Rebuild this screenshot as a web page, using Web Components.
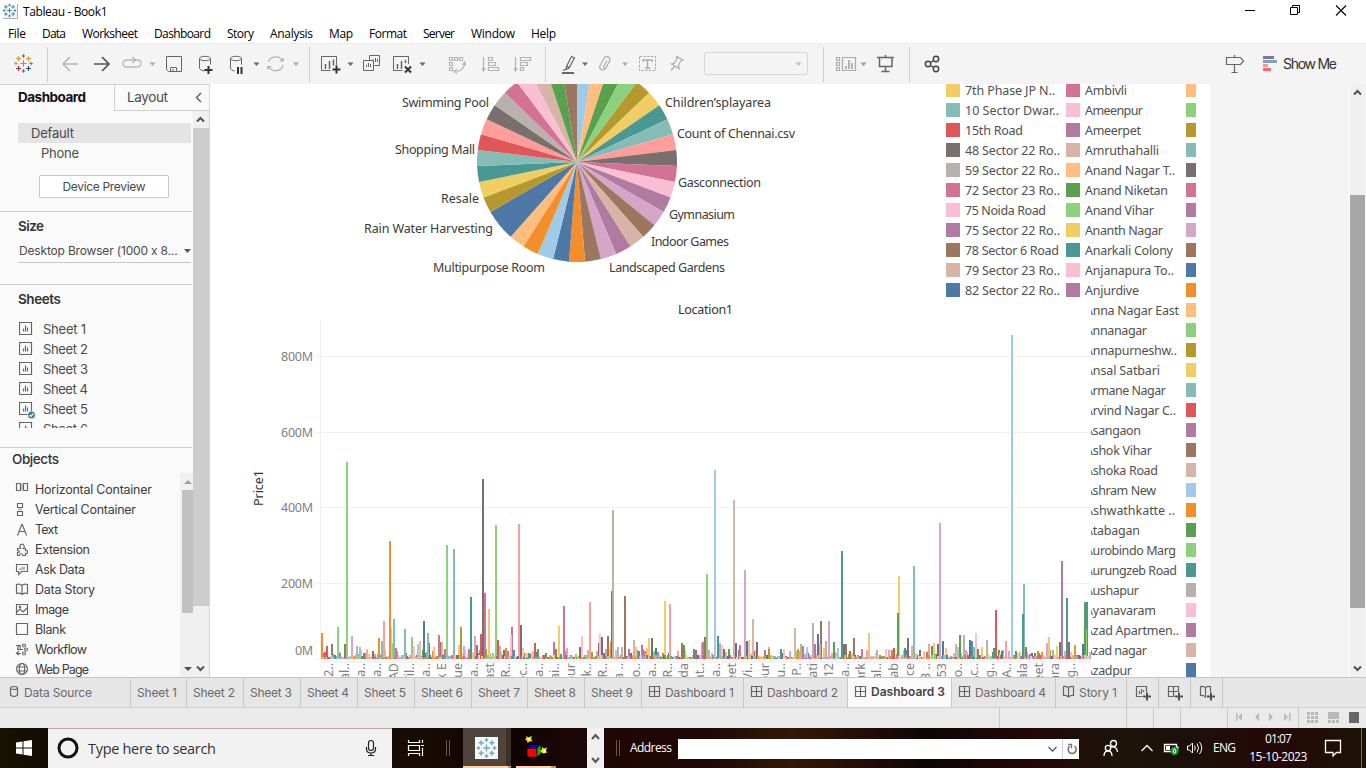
<!DOCTYPE html>
<html lang="en">
<head>
<meta charset="utf-8">
<title>Tableau - Book1</title>
<style>
html,body{margin:0;height:100%;overflow:hidden;background:#fff}
body{font-family:"Open Sans","Noto Sans",sans-serif}
</style>
</head>
<body>
<tableau-app></tableau-app>
<script>
const UI='"Open Sans","Noto Sans",sans-serif', PANEL='Inter,Roboto,sans-serif', VIZ='"Noto Sans","Open Sans",sans-serif';
const C={b:'#4e79a7',lb:'#a0cbe8',o:'#f28e2b',lo:'#ffbe7d',g:'#59a14f',lg:'#8cd17d',au:'#b6992d',y:'#f1ce63',t:'#499894',lt:'#86bcb6',r:'#e15759',s:'#ff9d9a',d:'#79706e',gy:'#bab0ac',m:'#d37295',p:'#fabfd2',pu:'#b07aa1',li:'#d4a6c8',br:'#9d7660',tn:'#d7b5a6'};
const define=(name,css,html,after)=>customElements.define(name,class extends HTMLElement{
  connectedCallback(){
    if(this.shadowRoot)return;
    const root=this.attachShadow({mode:'open'});
    root.innerHTML='<style>:host{display:block;box-sizing:border-box}svg{display:block}'+css+'</style>'+(typeof html==='function'?html(this):html);
    if(after)after(this,root);
  }
});
// A vertical strip of a bar, drawn in window coordinates.
const seg=(x0,x1,y0,h,inner)=>`<svg width="${x1-x0}" height="${h}" viewBox="${x0} ${y0} ${x1-x0} ${h}" fill="none" stroke="#666" style="flex:none">${inner}</svg>`;
// A run of text whose advance is adjusted to a given width.
define('fit-text',':host{display:inline-block;white-space:pre;flex:none}span{display:inline-block}','<span><slot></slot></span>',(el,root)=>{
  const w=parseFloat(el.getAttribute('w'));if(!w)return;
  const s=root.querySelector('span'),n=el.textContent.length,nat=s.getBoundingClientRect().width;
  el.style.width=w+'px';
  s.style.letterSpacing=((w-nat)/Math.max(1,n-1))+'px';
});
const fit=(s,w,st='')=>`<fit-text w="${w}" style="${st}">${s}</fit-text>`;
const svgText=(s,x,y,w,extra='')=>`<text x="${x}" y="${y}" textLength="${w}" ${extra}>${s}</text>`;
const plus=(x,y,r,c,w=1.2)=>`<path d="M${x-r} ${y}h${2*r}M${x} ${y-r}v${2*r}" stroke="${c}" stroke-width="${w}"/>`;
const mark=(x,y,k,cs,w)=>plus(x,y,3*k,cs[0],w)+[[0,-7,1],[7,0,2],[0,7,3],[-7,0,4]].map(a=>plus(x+a[0]*k,y+a[1]*k,1.6*k,cs[a[2]],w)).join('')+[[4.6,-4.6,5],[4.6,4.6,6],[-4.6,4.6,7],[-4.6,-4.6,8]].map(a=>plus(x+a[0]*k,y+a[1]*k,2.2*k,cs[a[2]],w)).join('');
const blueMark=Array(9).fill('#3b86b4');
const caret=(x,y,c='#666')=>`<path d="M${x-3} ${y-1.5}h6l-3 3.5z" fill="${c}" stroke="none"/>`;

define('title-bar',':host{display:flex;height:23px;background:#fff;color:#000;font:12px/23px '+UI+'}i{flex:1}',()=>
  seg(0,23,0,23,`<rect x="3" y="4" width="14" height="14" fill="#f4f4f4" stroke="none"/><path d="M3 18.5h14.5V4" stroke="#b0b0b0"/>`+mark(9.5,10.5,.78,blueMark,1))+
  fit('Tableau - Book1',84.5)+'<i></i>'+
  seg(1230,1366,0,23,`<g stroke="#000"><path d="M1245 10.5h10"/><path d="M1290.5 7.5h7v7h-7zM1292.5 7.5v-2h7v7h-2"/><path d="M1336 5.5l10 10M1346 5.5l-10 10" stroke-width="1.1"/></g>`));

define('menu-bar',':host{display:flex;height:20px;gap:16px;padding-left:8px;background:#fff;color:#000;font:12px/21px '+UI+'}',
  [['File',18],['Data',24],['Worksheet',56],['Dashboard',57],['Story',27],['Analysis',43],['Map',24],['Format',38],['Server',32],['Window',44],['Help',25]].map(a=>fit(...a)).join(''));

const S=(a,b,i)=>seg(a,b,44,40,i);
const sep=x=>S(x,x+1,`<path d="M${x+.5} 47v35" stroke="#cfcfcf"/>`);
define('tool-bar',':host{display:flex;height:41px;background:#f4f4f4;border-top:1px solid #ececec;color:#333}i{flex:1}fit-text{font:14px/39px '+PANEL+'}',()=>
  S(0,47,mark(23.5,63.5,1.08,['#e8762c','#5b6591','#5b879b','#5b6591','#7fa4ad','#eb912c','#1f457e','#c72035','#eb912c'],1.1))+sep(47)+
  S(48,309,`<path d="M63 64h15M70 57l-7 7 7 7" stroke="#b5b5b5" stroke-width="1.5"/><path d="M94 64h15M102 57l7 7-7 7" stroke="#555" stroke-width="1.7"/>
  <path d="M134 60h-7q-4 0-4 3.500t4 3.500h9q5 0 5-3.500t-4-3.500h-4M132 57l4 3-4 3" stroke="#b8b8b8" stroke-width="1.300"/>${caret(152.5,64,'#aaa')}
  <path d="M166.500 56.500h15v15h-13l-2-2zM170.500 71.500v-4h6v4M173 69v2"/>
  <ellipse cx="205" cy="58.500" rx="5.500" ry="2.200"/><path d="M199.500 58.500v10q1 2 5 2.500M210.500 58.500v6"/><path d="M204.500 70h8M208.500 66v8" stroke="#333" stroke-width="2"/>
  <ellipse cx="236" cy="58.500" rx="5.500" ry="2.200"/><path d="M230.500 58.500v10q1 2 4 2.500M241.500 58.500v6"/><path d="M238 67v7M241.500 67v7" stroke="#333" stroke-width="2"/>${caret(256.5,64)}
  <path d="M268.500 62a7.500 7 0 0 1 14-1M283 65a7.500 7 0 0 1-14 2" stroke="#b5b5b5" stroke-width="1.300"/><path d="M279 61.500h5v-4zM272 66h-5v4z" fill="#b5b5b5" stroke="none"/>${caret(296,64,'#aaa')}`)+sep(309)+
  S(310,545,`<path d="M336.500 65v-8.500h-15v14h9"/><path d="M325.500 64v5M329.500 61v8M333.500 59.500v6" stroke-width="1.500"/><path d="M332.500 69.500h8M336.500 65.500v8" stroke="#333" stroke-width="2"/>${caret(350.5,64)}
  <path d="M369.500 60.500v-5h10v10h-5M363.500 60.500h10v10h-10zM373 61v-2M375.500 62v-4M377.500 62v-3M366.500 67v-2M368.500 67v-4M370.500 67v-3"/>
  <path d="M408.500 64v-7.500h-15v14h9"/><path d="M397.500 64v5M401.500 61v8M405.500 60v3" stroke-width="1.500"/><path d="M405 66.500l6 6M411 66.500l-6 6" stroke="#333" stroke-width="2"/>${caret(422.5,64)}
  <g stroke="#b2b2b2" stroke-width="1.200"><path d="M449.500 57.500h3v3h-3zM454.500 57.500h3v3h-3zM459.500 57.500h3v3h-3zM449.500 62.500h3v3h-3zM449.500 67.500h3v3h-3zM464.500 63q0 7-8 8.500M462.500 65l2-3 1 3M457 69l-3 2.500 3 1.500"/>
  <path d="M483.500 57v13M481.500 68l2 3 2-3M488.500 57.500h4v3h-4zM488.500 62.500h7v3h-7zM488.500 67.500h10v3h-10z"/><path d="M515.500 57v13M513.500 68l2 3 2-3M520.500 57.500h10v3h-10zM520.500 62.500h7v3h-7zM520.500 67.500h3v3h-3z"/></g>`)+sep(545)+
  S(546,823,`<path d="M571.500 56.500l3 1.500-5.500 10-3 1.500.5-3zM567 66l2 2M566 69l-3 1.500" stroke-width="1.200"/><path d="M562 73h12" stroke-width="2"/>${caret(585,64)}
  <path d="M610 60l-4 8q-2 3-5 1.500-2-1.500-1-4l4-7q2-3 4.500-1.500t1 4.500l-3.500 6q-1 1.500-2 .5t0-2l3-5.500" stroke="#adadad" stroke-width="1.200"/>${caret(625,64,'#aaa')}
  <rect x="639.500" y="56.500" width="16" height="14" stroke="#aaa" stroke-dasharray="2.500 1.300"/><path d="M643 62v-2h9v2M647.500 60v8M645 68h5" stroke="#aaa" stroke-width="1.400"/>
  <path d="M676.500 56.500l6.500 3.500-2 .5-2.500 4.500.5 3.500-7.500-4.500 3-1 2.500-4.500zM674.500 66.500l-3.500 4" stroke="#aaa" stroke-width="1.200"/>
  <rect x="704.500" y="52.500" width="103" height="22" rx="1" stroke="#d5d5d5"/>${caret(798.5,64,'#c0c0c0')}`)+sep(823)+
  S(824,909,`<g stroke="#aaa" stroke-width="1.200"><path d="M836.500 57.500h3v3h-3zM836.500 62.500h3v3h-3zM836.500 67.500h3v3h-3zM842.500 57.500h13v13h-13z"/><path d="M846 66v3M849 60v9M852 63v6" stroke-width="1.800"/></g>${caret(863.5,64,'#999')}
  <path d="M877 57.500h17M879.500 58v8.500h12.500V58M885.500 67v4M881.500 71.500h8M885.500 55v2" stroke-width="1.500"/>`)+sep(909)+
  S(910,1000,`<g stroke="#444" stroke-width="1.400"><circle cx="928" cy="64" r="2.700"/><circle cx="936" cy="59" r="2.700"/><circle cx="936" cy="69" r="2.700"/><path d="M930.500 62.500l3-2M930.500 65.500l3 2"/></g>`)+'<i></i>'+
  S(1210,1283,`<path d="M1226.500 57.500h14l3 3.500-3 3.500h-14zM1234.500 55v2.500M1234.500 64.500V72M1231.500 72.500h6" stroke-width="1.200"/><g stroke="none"><path fill="#86719a" d="M1263 56h11v3h-11z"/><path fill="#7d9fcb" d="M1263 60h14v3h-14z"/><path fill="#f0a078" d="M1263 64h5v3h-5z"/><path fill="#f5687f" d="M1263 68h8v3h-8z"/></g>`)+fit('Show Me',54)+'<div style="width:29px"></div>');

// Sidebar
const chart='<path d="M.5.5h12v12H.5zM4.500 6.500v3M6.500 3.500v6M8.500 5.500v4"/>';
const objIcons=['<path d="M.5 .5h4v7h-4zM7.500.5h4v7h-4z"/><path d="M5 1h2v6H5z" fill="#bbb" stroke="none"/>','<path d="M1.500.5h5v4h-5zM1.500 8.500h5v4h-5z"/><path d="M2 5.500h4v2H2z" fill="#bbb" stroke="none"/>','<path d="M1.500 12.500l4.300-11h.5l4.200 11M3 8.500h6"/>','<path d="M1.500 5.500h3q-1.500-3 .5-4t3 1-.5 3h2v2q2-1 2 1.500t-2 1.500v2h-3q0-2-1.500-2t-1.500 2h-2v-3q2 0 2-1t-2-1z"/>','<path d="M.5 1.500h11v7h-6l-3 3v-3h-2z"/><path d="M3 7V5h2V4h2v-.5h2V7z" fill="#bbb" stroke="none"/>','<path d="M6 2.500q-2-2-5.500-1v9q3-1 5.500 1 2.500-2 5.500-1v-9Q8 .5 6 2.500zV11"/>','<path d="M.5 1.500h11v10H.5zM1 9l3-3 3 3 4-4"/><circle cx="4" cy="4" r=".7"/>','<path d="M.5.5h11v11H.5z"/>','<path d="M0 2.500h5M1 6.500h6M1 10.500h4M3 8l-2.500 2.500L3 12"/><circle cx="8" cy="2.500" r="1.500"/><circle cx="10" cy="6.500" r="1.500"/><circle cx="8" cy="10.500" r="1.500"/><circle cx="3" cy="5" r="1.500"/>','<circle cx="6" cy="6" r="5.500"/><ellipse cx="6" cy="6" rx="2.700" ry="5.500"/><path d="M1 4h10M1 8h10"/>'];
define('icon-row',':host{display:flex;height:20px;align-items:center}svg{overflow:visible;flex:none}div{width:var(--lead);flex:none;padding-bottom:1px}',el=>{
  const k=el.getAttribute('icon');
  const body=k==='sheet'?chart:objIcons[+k];
  return `<div><svg width="13" height="13" fill="none" stroke="#666" stroke-width="1.150">${body}${el.hasAttribute('used')?'<circle cx="12.500" cy="13" r="3.800" fill="#2f7da3" stroke="#fafafa" stroke-width=".6"/><path d="M10.700 13l1.300 1.300 2.300-2.600" stroke="#fff"/>':''}</svg></div>`+fit(el.getAttribute('label'),el.getAttribute('w'));
});
define('side-scroll',':host{display:flex;flex-direction:column;background:#f0f0f0}b{display:block;flex:none}',el=>{
  const g=n=>+el.getAttribute(n);
  const w=g('w'),arr=(up,h)=>`<svg width="${w}" height="${h}" fill="none">${el.hasAttribute('solid')?(up?`<path d="M4 ${h-6}h8l-4-4z" fill="#a0a0a0"/>`:`<path d="M4 ${h-10}h8l-4 4z" fill="#505050"/>`):(up?`<path d="M4 ${h/2+2}l3.500-3.500 3.500 3.500" stroke="#505050" stroke-width="2"/>`:`<path d="M4 ${h/2-2}l3.500 3.500 3.500-3.500" stroke="#505050" stroke-width="2"/>`)}</svg>`;
  return arr(1,g('top'))+`<b style="height:${g('before')}px"></b><b style="height:${g('thumb')}px;margin-left:${g('in')}px;background:${el.getAttribute('tone')}"></b><b style="flex:1"></b>`+arr(0,17);
});
define('side-panel',`:host{width:210px;height:593px;background:#fafafa;color:#4a4a4a;font:13px/20px ${PANEL};border-top:1px solid #d0d0d0;border-right:1px solid #d6d6d6;display:flex;flex-direction:column}
.tabs{display:flex;height:26px;flex:none;font-size:13.500px;line-height:25px}.a{width:96px;padding-left:18px;font-weight:700;color:#111}.l{flex:1;display:flex;align-items:center;border-left:1px solid #d0d0d0;border-bottom:1px solid #d0d0d0;padding-left:12px}
.body{display:flex;flex:1;min-height:0}.main{width:193px;display:flex;flex-direction:column;min-height:0}
.main>*{flex:none}.dev{margin:12px 2px 0 18px}.def{background:#e4e4e4;padding-left:13px;height:20px}.ph{padding-left:23px;height:20px}
.btn{margin:12px 0 0 39px;width:128px;height:21px;border:1px solid #c8c8c8;border-radius:1px;background:#fff;display:flex;align-items:center;justify-content:center;font-size:12px;line-height:19px}
hr{margin:0;border:0;border-top:1px solid #ccc;width:192px}h3{margin:0;font:600 13.500px/20px ${PANEL};color:#333}
.size{display:flex;margin:4px 2px 0 18px;height:22px;border-bottom:1px solid #c8c8c8;align-items:center;font-size:12px;line-height:21px}
.size fit-text{padding-bottom:1px}
.sheets{height:109px;overflow:hidden;margin-left:19px;--lead:24px}.objs{display:flex;height:204px;color:#3c3c3c}.list{width:164px;overflow:hidden;padding:7px 0 0 16px;height:197px;--lead:19px;font-size:12.500px}`,
`<div class="tabs"><div class="a">${fit('Dashboard',68)}</div><div class="l">${fit('Layout',41)}<svg width="36" height="20" fill="none" style="margin-left:4px"><path d="M29 5l-4.500 4.500L29 14" stroke="#555" stroke-width="1.300"/></svg></div></div>
<div class="body"><div class="main">
<div class="dev"><div class="def">${fit('Default',43)}</div><div class="ph">${fit('Phone',38)}</div></div>
<div class="btn">${fit('Device Preview',83)}</div>
<hr style="margin-top:13px"><h3 style="padding:4px 0 0 18px">${fit('Size',26)}</h3>
<div class="size">${fit('Desktop Browser (1000 x 8...',160,'margin-left:1px')}<svg width="12" height="8" style="margin-left:3px"><path d="M2 2h7l-3.500 4z" fill="#555"/></svg></div>
<hr style="margin-top:21px"><h3 style="padding:4px 0 0 18px">${fit('Sheets',43)}</h3>
<div class="sheets" style="margin-top:10px">${[1,2,3,4,5,6].map(i=>`<icon-row icon="sheet" label="Sheet ${i}" w="${i==1?43:45}" ${i==5?'used':''}></icon-row>`).join('')}</div>
<hr style="margin-top:19px"><h3 style="padding:1px 0 4px 12px;font-weight:500">${fit('Objects',47)}</h3>
<div class="objs"><div class="list">${[['Horizontal Container',117],['Vertical Container',101],['Text',23],['Extension',55],['Ask Data',50],['Data Story',60],['Image',34],['Blank',31],['Workflow',52],['Web Page',54]].map((a,i)=>`<icon-row icon="${i}" label="${a[0]}" w="${a[1]}"></icon-row>`).join('')}</div>
<side-scroll solid w="13" top="17" before="0" thumb="123" in="2" tone="#c1c1c1" style="width:13px;background:#f0f0f0"></side-scroll></div>
</div><side-scroll w="16" top="17" before="0" thumb="478" in="0" tone="#cdcdcd" style="width:16px"></side-scroll></div>`);

// Pie view
define('pie-view',`svg{font:12.500px ${VIZ}}`,()=>{
  const k='lb lo g lg au y t lt s d m p pu li br tn pu li br o b lb o lo b2 au y t lt r s d gy m p tn g br'.split(' ');
  let u=0,out='';const pt=n=>{const a=n*2*Math.PI/39;return (577+100*Math.sin(a)).toFixed(2)+' '+(162-100*Math.cos(a)).toFixed(2)};
  for(const c of k){const n=c==='b2'?2:1;out+=`<path d="M577 162L${pt(u)}A100 100 0 0 1 ${pt(u+n)}z" fill="${C[c==='b2'?'b':c]}"/>`;u+=n}
  const L=[['Swimming Pool',402,107,87],['Shopping Mall',395,154,80],['Resale',441,203,38],['Rain Water Harvesting',364,233,129],['Multipurpose Room',433,272,112],['Children’splayarea',665,107,106],['Count of Chennai.csv',677,138,118],['Gasconnection',678,187,83],['Gymnasium',669,219,66],['Indoor Games',651,246,78],['Landscaped Gardens',609,272,116]];
  return `<svg width="736" height="215" viewBox="210 84 736 215">${out}<g fill="#3a3a3a">${L.map(a=>svgText(...a)).join('')}</g></svg>`;
});

// Legend
define('legend-item',':host{display:flex;height:20px;align-items:center}b{width:14px;height:14px;margin-right:5px;flex:none}fit-text{padding-top:2px}',el=>`<b style="background:${C[el.getAttribute('c')]}"></b>`+(el.hasAttribute('label')?fit(el.getAttribute('label'),el.getAttribute('w')):''));
const c1='y|7th Phase JP N..|90,lt|10 Sector Dwar..|94,r|15th Road|58,d|48 Sector 22 Ro..|95,gy|59 Sector 22 Ro..|95,m|72 Sector 23 Ro..|95,p|75 Noida Road|81,pu|75 Sector 22 Ro..|95,br|78 Sector 6 Road|94,tn|79 Sector 23 Ro..|95,b|82 Sector 22 Ro..|95';
const c2='m|Ambivli|42,p|Ameenpur|58,pu|Ameerpet|56,tn|Amruthahalli|74,lo|Anand Nagar T..|90,g|Anand Niketan|83,lg|Anand Vihar|69,y|Ananth Nagar|78,t|Anarkali Colony|88,p|Anjanapura To..|89,pu|Anjurdive|54,tn|Anna Nagar East|94,b|Annanagar|62,o|Annapurneshw..|92,lo|Ansal Satbari|75,g|Armane Nagar|81,lg|Arvind Nagar C..|91,y|Asangaon|56,t|Ashok Vihar|67,lt|Ashoka Road|73,r|Ashram New|71,s|Ashwathkatte ..|90,d|Atabagan|55,m|Aurobindo Marg|91,p|Aurungzeb Road|92,pu|Aushapur|54,li|Ayanavaram|71,br|Azad Apartmen..|94,tn|Azad nagar|62,b|Azadpur|47';
const c3='lo lg au lt d m pu li br b o lo lg au y lt r pu br tn lb o g lg t gy p pu tn b'.split(' ');
define('color-legend',`:host{display:grid;grid-template-columns:120px 120px 10px;width:250px;height:593px;overflow:hidden;color:#505050;font:12.500px/18px ${VIZ}}div{margin-top:-4px}`,()=>{
  const it=s=>s.split(',').map(r=>{const[c,l,w]=r.split('|');return `<legend-item c="${c}" label="${l}" w="${w}"></legend-item>`}).join('');
  return `<div>${it(c1)}</div><div>${it(c2)}</div><div>${c3.map(c=>`<legend-item c="${c}"></legend-item>`).join('')}</div>`;
});

// Bar view: "left top colour" for each prominent mark
const marks=`321 633 o,326 646 r,331 644 br,337 627 lg,346 462 lg,344 644 br,351 636 li,356 646 gy,378 638 o,383 621 s,381 641 lt,390 628 lo,389 541 o,392 643 lg,393 619 lt,395 648 m,404 629 lt,411 637 lg,413 646 p,417 644 lb,419 641 lo,423 621 b,428 643 d,427 633 lt,433 647 lo,438 635 m,440 642 br,441 642 tn,446 545 lg,453 549 lt,458 645 lo,460 627 au,463 646 li,470 597 t,474 636 li,480 634 r,482 479 d,484 593 m,488 609 lo,495 525 lg,497 640 r,499 646 gy,505 648 o,511 627 pu,510 635 p,520 625 d,518 524 s,522 648 p,534 643 r,553 642 pu,558 626 y,563 606 m,566 648 li,579 647 d,581 636 p,589 602 s,598 643 d,601 637 d,599 634 p,607 636 br,610 642 o,611 591 d,612 510 gy,621 647 gy,624 596 br,628 649 m,633 640 tn,635 647 lo,641 645 pu,646 648 lo,648 638 y,651 638 d,655 648 b,664 601 y,669 604 s,681 643 br,683 645 g,695 650 r,701 643 gy,704 637 br,702 642 m,706 574 lg,714 470 lb,717 636 t,719 643 gy,721 645 p,735 643 b,733 500 tn,739 645 m,744 570 li,746 641 b,748 640 lo,752 619 tn,756 642 d,768 649 au,780 649 t,783 649 p,794 628 tn,797 649 o,800 644 lg,802 646 m,806 647 lb,812 623 gy,814 644 pu,817 634 b,820 621 br,819 644 s,823 648 y,825 641 gy,828 621 li,833 642 g,837 648 lb,841 551 t,843 644 d,845 644 br,853 638 br,861 649 m,868 633 lo,876 650 gy,891 650 au,893 648 r,898 576 y,897 613 g,904 648 t,907 638 d,911 646 tn,913 566 lt,919 650 b,928 644 s,931 646 g,933 643 y,937 644 d,939 523 li,942 641 b,945 648 lo,955 644 tn,957 647 lb,959 635 g,963 635 gy,969 640 b,971 641 t,973 647 lt,975 633 p,981 647 y,986 640 gy,993 648 g,995 610 r,1001 651 b,1005 641 s,1011 335 lb,1015 651 t,1023 584 lt,1022 614 t,1025 647 br,1037 651 au,1046 643 li,1048 637 lo,1056 646 y,1059 642 d,1061 561 pu,1066 598 t,1068 642 d,1074 645 o,1082 644 b,1084 602 g,1086 602 t`;
const ticks='k 2..|Gal..|ja..|la..|BAD|Vil..|ha..|rk E|gue|oa..|East|R..|Sec..|ha..|Nai..|pur|ok..|R..|ra ..|ro..|na..|R..|oda|nt..|la..|eet|Vi..|pur|Ru..|P..|pati|r 12|na..|Park|Hal..|njab|ace|B ..|r 53|Ro..|Ac..|ng..|A..|kala|eet|ara|ng..'.split('|');
define('bar-view',`:host{background:#fff}svg{font:12.500px ${VIZ}}`,()=>{
  let seed=17;const rnd=()=>(seed=(seed*16807)%2147483647)/2147483647;
  const keys=Object.keys(C);let low='',tall='';
  for(let x=321;x<1090;x+=1.5){const q=rnd(),h=1.5+9*Math.pow(q,2.6)+(rnd()>.96?4:0),X=Math.round(x);low+=`<path fill="${C[keys[Math.floor(rnd()*20)]]}" d="M${X} 659v-${Math.round(h)}h2v${Math.round(h)}z"/>`}
  for(const r of marks.split(',')){const[x,y,c]=r.split(' ');tall+=`<path fill="${C[c]}" d="M${x} ${y}h2V659h-2z"/>`}
  // foreground specks at the feet of the marks
  for(let x=322;x<1090;x+=3){const h=1+Math.floor(rnd()*4);tall+=`<path fill="${C[keys[Math.floor(rnd()*20)]]}" d="M${x} 659v-${h}h2v${h}z"/>`}
  const grid=[356,432,507,583].map(y=>`<path d="M316 ${y+.5}h775" stroke="#f1f1f1"/>`).join('')+'<path d="M320.500 321v338M316 659.500h5" stroke="#f0f0f0"/>';
  const ax=[['800M',361,32,281],['600M',437,32,281],['400M',512,32,281],['200M',588,32,281],['0M',655,18,295]].map(a=>svgText(a[0],a[3],a[1],a[2])).join('');
  const tk=ticks.map((t,i)=>`<text transform="translate(${(333+16.13*i).toFixed(1)} 663) rotate(-90)" text-anchor="end">${t}</text>`).join('');
  return `<svg width="881" height="378" viewBox="210 299 881 378" shape-rendering="crispEdges">${grid}<path fill="#f4f4f4" d="M321 659h770v4H321z"/>${low}${tall}<path fill="${C.lg}" d="M1086 629h1v30h-1z"/><g fill="#808080">${ax}${tk}</g><g fill="#333">${svgText('Location1',678,314,55)}<text transform="translate(263 506) rotate(-90)" textLength="36">Price1</text></g></svg>`;
});
// Dashboard objects float over one another on the fixed-size sheet.
define('dashboard-canvas',':host{position:relative;width:1000px;height:593px;background:#fff;overflow:hidden}pie-view,bar-view,color-legend{position:absolute}pie-view{left:0;top:0}color-legend{left:736px;top:0}bar-view{left:0;top:215px}','<pie-view></pie-view><color-legend></color-legend><bar-view></bar-view>');
define('work-area',':host{display:flex;height:593px;background:#f4f4f4}i{width:140px;border-right:1px solid #fff;box-sizing:border-box}',
'<side-panel></side-panel><dashboard-canvas></dashboard-canvas><i></i><side-scroll w="15" top="17" before="94" thumb="413" in="0" tone="#a6a6a6" style="width:15px"></side-scroll>');

const grid9='<path d="M.5.5h10v10H.5zM5.500.5v10M.5 5.500h10"/>',book='<path d="M5.500 1.500Q3 0 .5.5v9q3-.5 5 1.500 2-2 5-1.500v-9Q8 0 5.500 1.500zV11"/>';
define('sheet-tab',':host{display:flex;align-items:center;height:29px;border-right:1px solid #c8c8c8;color:#6a6a6a;flex:none}:host([active]){background:#fafafa;color:#444;font-weight:600;line-height:26px}svg{flex:none;overflow:visible;margin-bottom:2px}:host([active]) fit-text{padding-bottom:2px}',el=>{
  const k=el.getAttribute('kind'),p=+el.getAttribute('p')||6;
  const ic={d:grid9,s:book,src:'<ellipse cx="4" cy="2" rx="3.500" ry="1.500"/><path d="M.5 2v7q3.500 3 7 0V2"/>',n:'<path d="M10.500 6V.5H.5v10h6M3.500 8V5M5.500 8V3M7.500 6V4"/>',nd:'<path d="M10.500 6V.5H.5v10h6M5.500.5v10M.5 5.500h10"/>',ns:'<path d="M10.500 6V.5Q8 0 5.500 1.500 3 0 .5.5v9q3-.5 5 1.500V1.500"/>'}[k];
  const add=k&&k[0]==='n'?'<path d="M7 10.500h8M11 6.500v8" stroke="#555" stroke-width="2"/>':'';
  return `<div style="width:${p}px"></div>`+(ic?`<svg width="11" height="11" fill="none" stroke="#666" stroke-width="1.200">${ic+add}</svg>`:'')+(el.hasAttribute('label')?fit(el.getAttribute('label'),el.getAttribute('w'),ic?`margin-left:${el.getAttribute('g')||5}px`:''):'');
});
define('tab-strip',`:host{display:flex;height:31px;background:#e6e6e6;border-top:1px solid #c4c4c4;border-bottom:1px solid #d0d0d0;font:12px/28px ${PANEL}}`,()=>{
  const e=[130,186,243,300,357,414,471,527,584,641];
  let o=`<sheet-tab kind="src" p="10" g="3" label="Data Source" w="68" style="width:131px"></sheet-tab>`;
  for(let i=1;i<10;i++)o+=`<sheet-tab label="Sheet ${i}" w="${i==1?40:42}" style="width:${e[i]-e[i-1]}px"></sheet-tab>`;
  [['Dashboard 1',743,641,69],['Dashboard 2',847,743,71],['Dashboard 3',951,847,74],['Dashboard 4',1055,951,71]].forEach((a,i)=>o+=`<sheet-tab kind="d" p="7" label="${a[0]}" w="${a[3]}" ${i==2?'active':''} style="width:${a[1]-a[2]}px"></sheet-tab>`);
  o+='<sheet-tab kind="s" p="7" label="Story 1" w="38" style="width:71px"></sheet-tab><sheet-tab kind="n" p="9" style="width:32px"></sheet-tab><sheet-tab kind="nd" p="9" style="width:32px"></sheet-tab><sheet-tab kind="ns" p="9" style="width:32px"></sheet-tab>';
  return o;
});
define('status-bar',':host{display:flex;justify-content:flex-end;height:20px;background:#eaeaea}',seg(990,1366,708,20,[999,1126,1153,1180,1227,1298].map(x=>`<path d="M${x+.5} 708v20" stroke="#c9c9c9"/>`).join('')+
`<g fill="#b8b8b8" stroke="none"><path d="M1236 713h1.500v8h-1.500zM1242 713v8l-4-4zM1259 713v8l-4-4zM1269 713v8l4-4zM1284 713v8l4-4zM1289 713h1.500v8h-1.500z"/><path d="M1307 712h3v3h-3zM1311 712h3v3h-3zM1315 712h3v3h-3zM1307 716h3v3h-3zM1311 716h3v3h-3zM1315 716h3v3h-3zM1307 720h3v3h-3zM1311 720h3v3h-3zM1315 720h3v3h-3zM1328 712h11v7h-11zM1328 720h3v3h-3zM1332 720h3v3h-3zM1336 720h3v3h-3z"/></g><path d="M1349 712h10v11h-10z" fill="#666" stroke="none"/>`));

const K=(a,b,i)=>seg(a,b,728,40,`<g stroke="#fff">${i}</g>`);
define('search-box',`:host{display:flex;width:344px;height:40px;background:#f2f2f2;border-top:1px solid #b9a9a5;color:#333;font:14.500px/39px ${UI}}i{flex:1}svg{margin-top:-1px}`,
 K(48,88,'<circle cx="68" cy="748" r="9" stroke="#111" stroke-width="3"/>')+fit('Type here to search',128)+'<i></i>'+K(350,392,'<g stroke="#222" stroke-width="1.200"><rect x="368.500" y="740.500" width="5" height="10" rx="2.500"/><path d="M366.500 747v2q0 4 4.500 4t4.500-4v-2M371 753v3M368 755.500h6"/></g>'));
define('clock-face',`:host{width:60px;text-align:center;color:#fff;font:12px/18px ${UI};padding-top:2px}fit-text{display:block;margin:0 auto}`,fit('01:07',27)+fit('15-10-2023',58));
define('task-bar',`:host{display:flex;height:40px;color:#fff;font:12px/40px ${UI};background:linear-gradient(90deg,#171201 0,#120904 5%,#1a0b05 30%,#100503 38%,#200606 44%,#1e0905 52%,#321806 58%,#210b05 64%,#0c0605 68%,#220706 75%,#1c1409 82%,#1c100a 87%,#250806 93%,#1c1205 100%)}.addr{display:flex;width:401px;height:20px;margin-top:11px;background:#fff;justify-content:flex-end}`,()=>
 K(0,48,'<path d="M16 742.500l6.500-1v6H16zM23.500 741.300l8.500-1.300v7.500h-8.500zM16 748.500h6.500v6l-6.500-1zM23.500 748.500H32v7.500l-8.500-1.300z" fill="#fff" stroke="none"/>')+
 '<search-box></search-box>'+
 K(392,630,`<path d="M408.500 740v2.500h11V740M408.500 756v-2.500h11V756M408.500 745.500h11v5h-11zM422.500 740v3M422.500 748v8M421 745.500h3" stroke-width="1.200"/><path d="M446.500 740v16M449.500 740v16M616.500 740v16M619.500 740v16" stroke="#655a54"/>
 <path d="M463 728h48v40h-48z" fill="#51443d" stroke="none"/><path d="M506 728h5v40h-5z" fill="#3c302b" stroke="none"/><path d="M463 766h45v2h-45zM516 766h35v2h-35z" fill="#ffd3a3" stroke="none"/><path d="M508 766h3v2h-3zM551 766h5v2h-5z" fill="#bd9b7b" stroke="none"/>
 <rect x="475" y="737" width="23" height="22" fill="#f7f8fa" stroke="none"/>${mark(486.500,748,1.150,Array(9).fill('#6faac6'),1.500)}
 <g stroke="#000" stroke-width=".7"><path d="M527 748h10v9h-10z" fill="#f00"/><path d="M527 748l3-3.500h11l-4 3.500z" fill="#00f"/><path d="M537 748l4-3.500v9l-4 3.500z" fill="#00b634"/><path d="M526 736l2.500 1.500L532 736l-1 3 1.500 2-3 .5-2 1.500-.5-2.500-2-1 1.500-1.500zM542 747l2 1.500 3-1-1 3 1 2-3 1-2-.5-2-2.500 2-1z" fill="#ffe600" stroke="none"/></g><circle cx="529" cy="739" r="1" fill="#fff" stroke="none"/><circle cx="544.500" cy="751" r="1.200" fill="#fff" stroke="none"/>
 <path d="M587 728h17v40h-17z" fill="#f0f0f0" stroke="none"/><path d="M592 739l3.500-4 3.500 4M592 758l3.500 4 3.500-4" stroke="#555" stroke-width="2"/>`)+
 fit('Address',42)+'<div style="width:6px"></div><div class="addr">'+seg(1040,1079,739,20,'<path d="M1048.500 747l4 4 4-4" stroke="#555" stroke-width="1.300"/><path d="M1062.500 739v20" stroke="#d0d0d0"/><path d="M1074.500 746.200a4 4 0 1 1-4.700 0" stroke="#777" stroke-width="1.600"/><path d="M1068 744.500h3.500v4" stroke="#777" stroke-width="1.400"/>')+'</div>'+
 K(1079,1213,`<g stroke-width="1.300"><circle cx="1108" cy="748" r="2.700"/><path d="M1104 756q0-5 4-5t4 5"/><circle cx="1113.500" cy="743.500" r="3"/><path d="M1111 747q6-1 6.500 5"/><path d="M1141.500 751l5.500-5.500 5.500 5.500"/><path d="M1164.500 744.500h12v7h-12z"/><path d="M1166 746h4v4h-4zM1177 746.500h1.500v3h-1.500z" fill="#fff" stroke="none"/></g><circle cx="1174.500" cy="751" r="4.200" fill="#16922b" stroke="none"/><path d="M1174.500 748.500q3 2.500 0 5-3-2.500 0-5z" stroke="#fff" fill="none"/><path d="M1187.500 746v4h2l3 3v-10l-3 3zM1194.500 745.500q1.500 2.500 0 5M1197 743.500q3 4.500 0 9M1199.500 742q4.500 6 0 12"/>`)+
 fit('ENG',23)+'<div style="width:12px"></div><clock-face></clock-face>'+
 K(1308,1366,'<path d="M1325.500 740.500h15v12h-4l-3.500 3.500v-3.500h-7.500z" stroke-width="1.300"/><path d="M1361.500 728v40" stroke="#776c68"/>'));

define('tableau-app',':host{display:grid;grid-template-rows:23px 20px 41px 593px 31px 20px 40px;width:1366px;height:768px}','<title-bar></title-bar><menu-bar></menu-bar><tool-bar></tool-bar><work-area></work-area><tab-strip></tab-strip><status-bar></status-bar><task-bar></task-bar>');
</script>
</body>
</html>
